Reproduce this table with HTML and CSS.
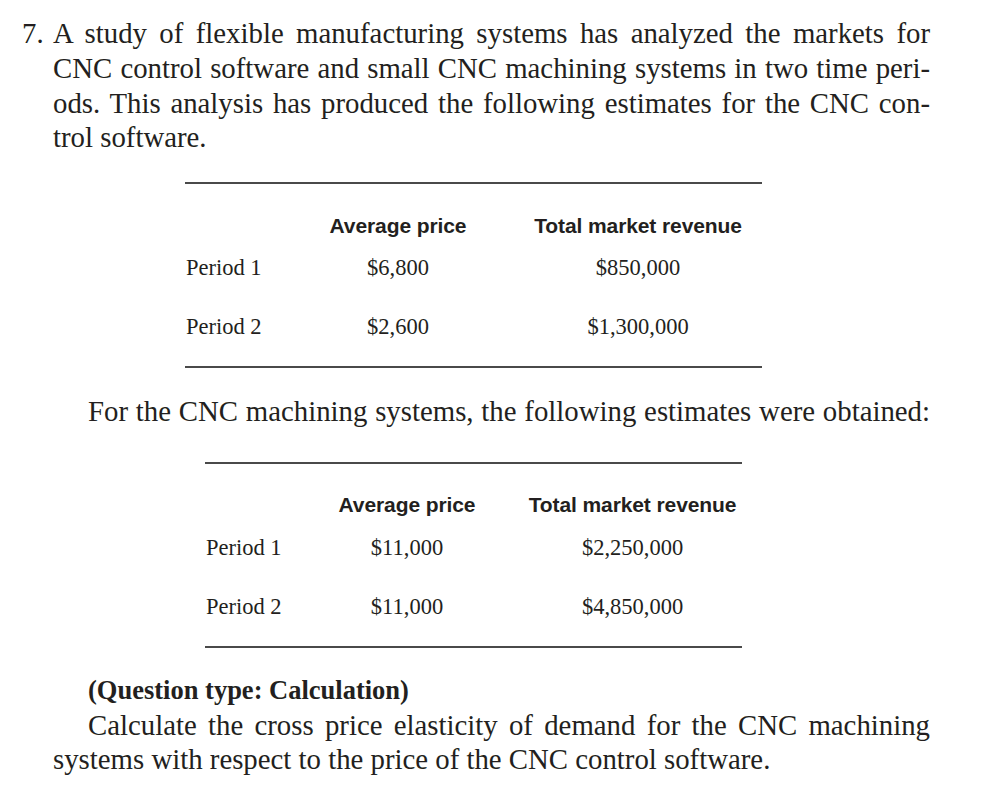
FILE: index.html
```html
<!DOCTYPE html>
<html lang="en">
<head>
<meta charset="utf-8">
<title>Problem 7</title>
<link rel="stylesheet" href="styles.css">
</head>
<body>
<div class="page">
  <p class="para">
    <span class="ln"><span class="num">7.</span>A study of flexible manufacturing systems has analyzed the markets for</span>
    <span class="ln">CNC control software and small CNC machining systems in two time peri-</span>
    <span class="ln">ods. This analysis has produced the following estimates for the CNC con-</span>
    <span class="ln last">trol software.</span>
  </p>

  <div class="tbl tbl-one">
    <div class="row head">
      <span class="c1"></span>
      <span class="c2">Average price</span>
      <span class="c3">Total market revenue</span>
    </div>
    <div class="row r1">
      <span class="c1">Period 1</span>
      <span class="c2">$6,800</span>
      <span class="c3">$850,000</span>
    </div>
    <div class="row r2">
      <span class="c1">Period 2</span>
      <span class="c2">$2,600</span>
      <span class="c3">$1,300,000</span>
    </div>
  </div>

  <p class="para lead">
    <span class="ln indent">For the CNC machining systems, the following estimates were obtained:</span>
  </p>

  <div class="tbl tbl-two">
    <div class="row head">
      <span class="c1"></span>
      <span class="c2">Average price</span>
      <span class="c3">Total market revenue</span>
    </div>
    <div class="row r1">
      <span class="c1">Period 1</span>
      <span class="c2">$11,000</span>
      <span class="c3">$2,250,000</span>
    </div>
    <div class="row r2">
      <span class="c1">Period 2</span>
      <span class="c2">$11,000</span>
      <span class="c3">$4,850,000</span>
    </div>
  </div>

  <p class="para task">
    <span class="qtype">(Question type: Calculation)</span>
    <span class="ln indent">Calculate the cross price elasticity of demand for the CNC machining</span>
    <span class="ln last">systems with respect to the price of the CNC control software.</span>
  </p>
</div>
</body>
</html>
```

FILE: styles.css
```css
html, body {
  margin: 0;
  padding: 0;
  background: #ffffff;
}

body {
  color: #231f20;
  font-family: "Liberation Serif", "Times New Roman", serif;
}

.page {
  width: 877px;
  padding: 16px 0 0 53px;
}

.para {
  margin: 0;
  font-size: 28.8px;
  line-height: 34.8px;
}

.ln {
  display: block;
  text-align: justify;
  text-align-last: justify;
}

.ln.last {
  text-align-last: left;
}

.ln.indent {
  padding-left: 35px;
}

.num {
  display: inline-block;
  width: 31px;
  margin-left: -31px;
}

/* tables */
.tbl {
  border-top: 2px solid #4a4a4a;
  border-bottom: 2px solid #4a4a4a;
  padding: 26.5px 0 24px 0;
}

.tbl-one {
  margin: 27px 0 0 132px;
  width: 577px;
}

.tbl-two {
  margin: 33px 0 0 152px;
  width: 537px;
}

.row {
  display: grid;
  grid-template-columns: 138px 150px 1fr;
  font-size: 22.5px;
  line-height: 30px;
}

.tbl-two .row {
  grid-template-columns: 127px 150px 1fr;
}

.row.r1 {
  margin-top: 12.7px;
}

.row.r2 {
  margin-top: 29px;
}

.row.head {
  font-family: "Liberation Sans", Arial, sans-serif;
  font-weight: bold;
  font-size: 21px;
  letter-spacing: -0.1px;
}

.c1 {
  padding-left: 1px;
  white-space: nowrap;
}

.c2 {
  text-align: center;
  white-space: nowrap;
}

.c3 {
  text-align: center;
  padding-left: 41px;
  white-space: nowrap;
}

.lead {
  margin-top: 25.4px;
}

.task {
  margin-top: 25px;
}

.qtype {
  display: block;
  padding-left: 35px;
  font-weight: bold;
  font-size: 26.5px;
}
```
